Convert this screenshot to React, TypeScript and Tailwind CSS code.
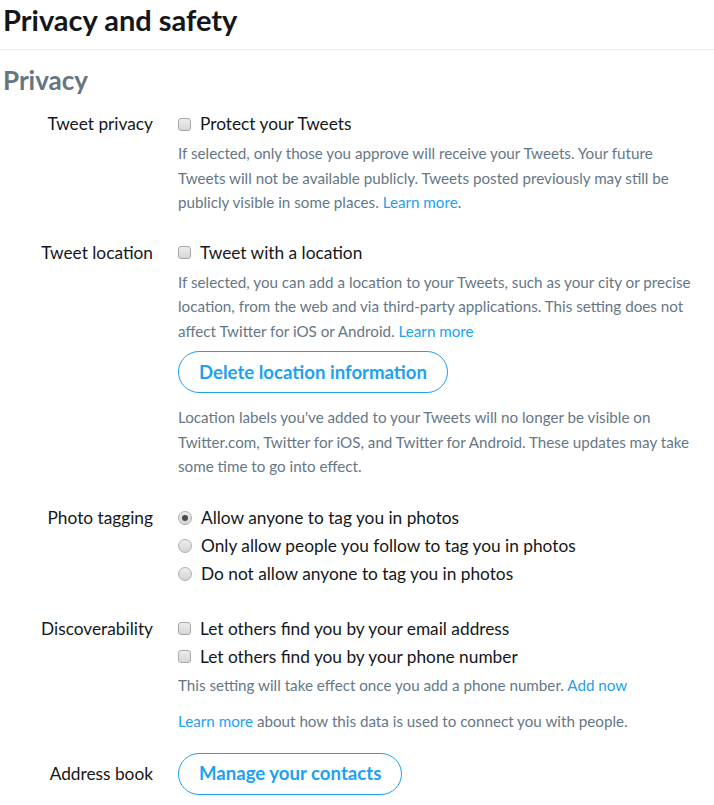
import type { ReactNode } from 'react';

const font = { fontFamily: '"Segoe UI", Lato, "Noto Sans", sans-serif' };

function Checkbox() {
  return (
    <span className="inline-block w-[13px] h-[13px] shrink-0 rounded-[3px] border border-[#a8a8a8] bg-gradient-to-b from-[#ececec] to-[#d6d6d6]" />
  );
}

function Radio({ checked = false }: { checked?: boolean }) {
  return (
    <span className="inline-flex items-center justify-center w-[14px] h-[14px] shrink-0 rounded-full border border-[#b0b0b0] bg-gradient-to-b from-[#eeeeee] to-[#d4d4d4]">
      {checked && <span className="w-[6px] h-[6px] rounded-full bg-[#4a4a4a]" />}
    </span>
  );
}

function Option({ control, children }: { control: ReactNode; children: ReactNode }) {
  return (
    <div className="flex items-center gap-[9px] h-[28px] text-[17.3px] text-[#14171a]">
      {control}
      <span>{children}</span>
    </div>
  );
}

function Note({ children, className = '' }: { children: ReactNode; className?: string }) {
  return <p className={`text-[15.2px] leading-[24.5px] text-[#657786] pr-[20px] ${className}`}>{children}</p>;
}

function Link({ children }: { children: ReactNode }) {
  return <a className="text-[#1da1f2]">{children}</a>;
}

function OutlineButton({ children }: { children: ReactNode }) {
  return (
    <button className="rounded-full border border-[#1da1f2] text-[#1da1f2] font-bold text-[18.6px] px-[20px] h-[42px] leading-none">
      {children}
    </button>
  );
}

function Row({ label, children, className = '' }: { label: string; children: ReactNode; className?: string }) {
  return (
    <div className={`grid grid-cols-[153px_1fr] gap-x-[25px] ${className}`}>
      <div className="text-right text-[17.3px] text-[#14171a] h-[28px] leading-[28px] whitespace-nowrap">{label}</div>
      <div>{children}</div>
    </div>
  );
}

export default function App() {
  return (
    <div className="w-[714px] h-[805px] bg-white overflow-hidden" style={font}>
      <div className="h-[50px] border-b border-[#e6ecf0] px-[3px]">
        <h1 className="text-[29px] font-bold leading-[40px] text-[#14171a]">Privacy and safety</h1>
      </div>
      <h2 className="mt-[14px] px-[3px] text-[26px] font-bold leading-[32px] text-[#66757f]">Privacy</h2>

      <Row label="Tweet privacy" className="mt-[14px]">
        <Option control={<Checkbox />}>Protect your Tweets</Option>
        <Note className="mt-[3px]">
          If selected, only those you approve will receive your Tweets. Your future Tweets will not be
          available publicly. Tweets posted previously may still be publicly visible in some places.{' '}
          <Link>Learn more</Link>.
        </Note>
      </Row>

      <Row label="Tweet location" className="mt-[24px]">
        <Option control={<Checkbox />}>Tweet with a location</Option>
        <Note className="mt-[3px]">
          If selected, you can add a location to your Tweets, such as your city or precise location, from
          the web and via third-party applications. This setting does not affect Twitter for iOS or
          Android. <Link>Learn more</Link>
        </Note>
        <div className="mt-[8px]">
          <OutlineButton>Delete location information</OutlineButton>
        </div>
        <Note className="mt-[12px]">
          Location labels you've added to your Tweets will no longer be visible on Twitter.com, Twitter
          for iOS, and Twitter for Android. These updates may take some time to go into effect.
        </Note>
      </Row>

      <Row label="Photo tagging" className="mt-[25px]">
        <Option control={<Radio checked />}>Allow anyone to tag you in photos</Option>
        <Option control={<Radio />}>Only allow people you follow to tag you in photos</Option>
        <Option control={<Radio />}>Do not allow anyone to tag you in photos</Option>
      </Row>

      <Row label="Discoverability" className="mt-[27px]">
        <Option control={<Checkbox />}>Let others find you by your email address</Option>
        <Option control={<Checkbox />}>Let others find you by your phone number</Option>
        <Note className="mt-[2px]">
          This setting will take effect once you add a phone number. <Link>Add now</Link>
        </Note>
        <Note className="mt-[12px]">
          <Link>Learn more</Link> about how this data is used to connect you with people.
        </Note>
      </Row>

      <div className="grid grid-cols-[153px_1fr] gap-x-[25px] items-center mt-[19px]">
        <div className="text-right text-[17.3px] text-[#14171a]">Address book</div>
        <div>
          <OutlineButton>Manage your contacts</OutlineButton>
        </div>
      </div>
    </div>
  );
}
